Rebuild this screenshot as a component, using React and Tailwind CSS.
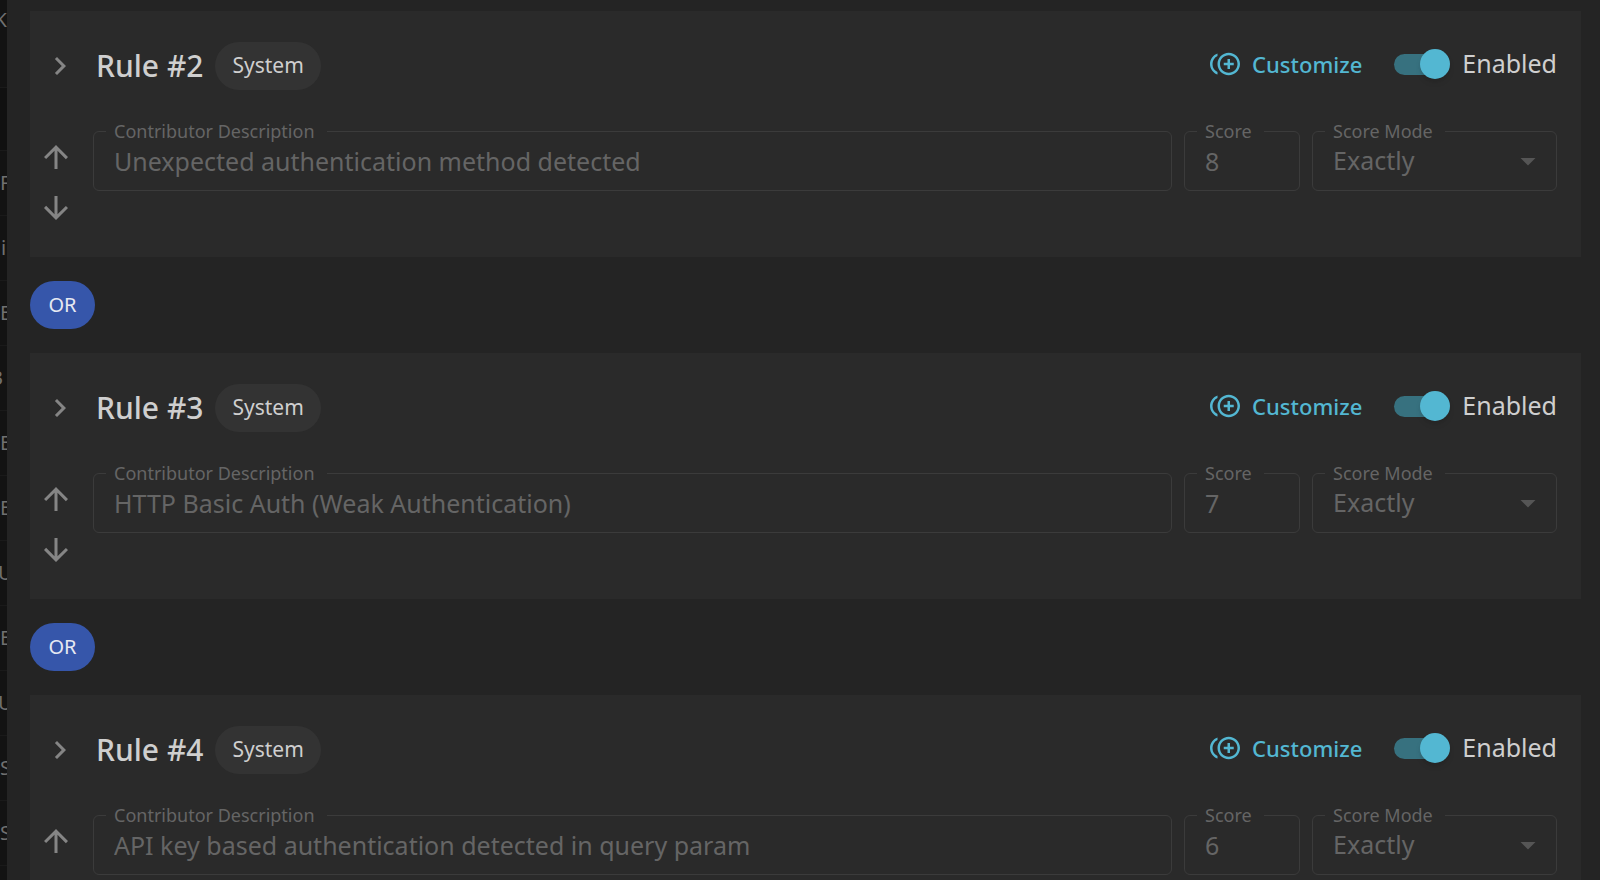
import { useState } from 'react';
import {
  MdArrowDownward,
  MdArrowDropDown,
  MdArrowUpward,
  MdChevronRight,
  MdControlPointDuplicate,
} from 'react-icons/md';

const initialRules = [
  { id: 2, description: 'Unexpected authentication method detected', score: 8 },
  { id: 3, description: 'HTTP Basic Auth (Weak Authentication)', score: 7 },
  { id: 4, description: 'API key based authentication detected in query param', score: 6 },
];

// rows of the table that peeks out from under the drawer
const tableRows = [
  { text: 'F' },
  { text: 'i', className: 'pl-px' },
  { text: 'E' },
  { text: 'B', className: '-ml-2.5' },
  { text: 'E' },
  { text: 'E' },
  { text: 'U', className: '-ml-0.5' },
  { text: 'E' },
  { text: 'U', className: '-ml-0.5' },
  { text: 'S' },
  { text: 'S' },
];

const Field = ({ id, label, className, children }) => (
  <div className={`relative ${className}`}>
    <fieldset className="absolute inset-x-0 -top-3 bottom-0 rounded-md border border-[#3b3b3b] px-3">
      <legend className="pr-3 pl-2 text-lg leading-6 text-[#656565]">
        <label htmlFor={id}>{label}</label>
      </legend>
    </fieldset>
    {children}
  </div>
);

const RuleCard = ({ rule, onToggle }) => (
  <section className="h-[246px] bg-[#2a2a2a] pt-[27px] pr-6 pl-2">
    <div className="flex h-14 items-center">
      <button aria-label="Expand rule" className="flex w-11 justify-center text-[#858585]">
        <MdChevronRight className="size-9" />
      </button>
      <h2 className="ml-3.5 text-3xl font-medium text-[#cfcfcf]">Rule #{rule.id}</h2>
      <span className="ml-3 flex h-12 items-center rounded-full bg-[#333333] px-[17px] text-[21px] text-[#cfcfcf]">
        System
      </span>
      <div className="ml-auto flex items-center gap-8 pb-1">
        <button className="flex items-center gap-3 text-[22px] font-medium text-[#53b7d2]">
          <MdControlPointDuplicate className="size-[30px]" />
          Customize
        </button>
        <label className="flex items-center gap-3 text-[25px] text-[#cfcfcf]">
          <span className="relative flex h-8 w-14 items-center">
            <input
              type="checkbox"
              checked={rule.enabled}
              onChange={() => onToggle(rule.id)}
              className="peer h-[21px] w-[52px] appearance-none rounded-full bg-[#555555] checked:bg-[#37717f]"
            />
            <span className="pointer-events-none absolute left-0 size-[30px] rounded-full bg-[#aaaaaa] shadow-md peer-checked:left-[26px] peer-checked:bg-[#53b7d2]" />
          </span>
          Enabled
        </label>
      </div>
    </div>
    <div className="mt-[37px] flex gap-3">
      <div className="flex w-[43px] flex-col text-[#858585]">
        <button aria-label="Move up" className="flex h-[51px] w-9 items-center justify-center">
          <MdArrowUpward className="size-9" />
        </button>
        <button aria-label="Move down" className="flex h-[51px] w-9 items-center justify-center">
          <MdArrowDownward className="size-9" />
        </button>
      </div>
      <Field id={`description-${rule.id}`} label="Contributor Description" className="h-[60px] flex-1">
        <input
          id={`description-${rule.id}`}
          disabled
          value={rule.description}
          className="relative size-full bg-transparent px-[21px] text-[25px] text-[#656565]"
        />
      </Field>
      <Field id={`score-${rule.id}`} label="Score" className="h-[60px] w-[116px]">
        <input
          id={`score-${rule.id}`}
          disabled
          value={rule.score}
          className="relative size-full bg-transparent px-[21px] text-[25px] text-[#656565]"
        />
      </Field>
      <Field id={`mode-${rule.id}`} label="Score Mode" className="h-[60px] w-[245px]">
        <select
          id={`mode-${rule.id}`}
          disabled
          className="relative size-full appearance-none bg-transparent px-[21px] text-[25px] text-[#656565] opacity-100"
        >
          <option>Exactly</option>
        </select>
        <MdArrowDropDown className="pointer-events-none absolute top-3 right-[11px] size-9 text-[#555555]" />
      </Field>
    </div>
  </section>
);

const OrChip = () => (
  <span className="my-6 flex h-12 w-[65px] items-center justify-center rounded-full bg-[#3656aa] text-xl text-[#e6e9f2]">
    OR
  </span>
);

function App() {
  const [rules, setRules] = useState(initialRules.map((rule) => ({ ...rule, enabled: true })));

  const handleToggle = (id) => {
    setRules(rules.map((rule) => (rule.id === id ? { ...rule, enabled: !rule.enabled } : rule)));
  };

  return (
    <div className="flex h-screen overflow-hidden bg-[#242424] font-['Noto_Sans',sans-serif]">
      <aside className="w-[7px] shrink-0 overflow-hidden bg-[#131313] text-xl text-[#707070]">
        <div className="flex h-[88px] justify-end border-b border-[#1a1a1a] pt-1.5">K</div>
        <div className="h-[63px] border-b border-[#1a1a1a] bg-[#101010]" />
        {tableRows.map((row, i) => (
          <div key={i} className="flex h-[65px] items-center border-b border-[#1a1a1a]">
            <span className={row.className}>{row.text}</span>
          </div>
        ))}
      </aside>
      <main className="flex-1 overflow-hidden pt-[11px] pr-[19px] pl-[23px]">
        {rules.map((rule, i) => (
          <div key={rule.id}>
            {i > 0 && <OrChip />}
            <RuleCard rule={rule} onToggle={handleToggle} />
          </div>
        ))}
      </main>
    </div>
  );
}

export default App;
